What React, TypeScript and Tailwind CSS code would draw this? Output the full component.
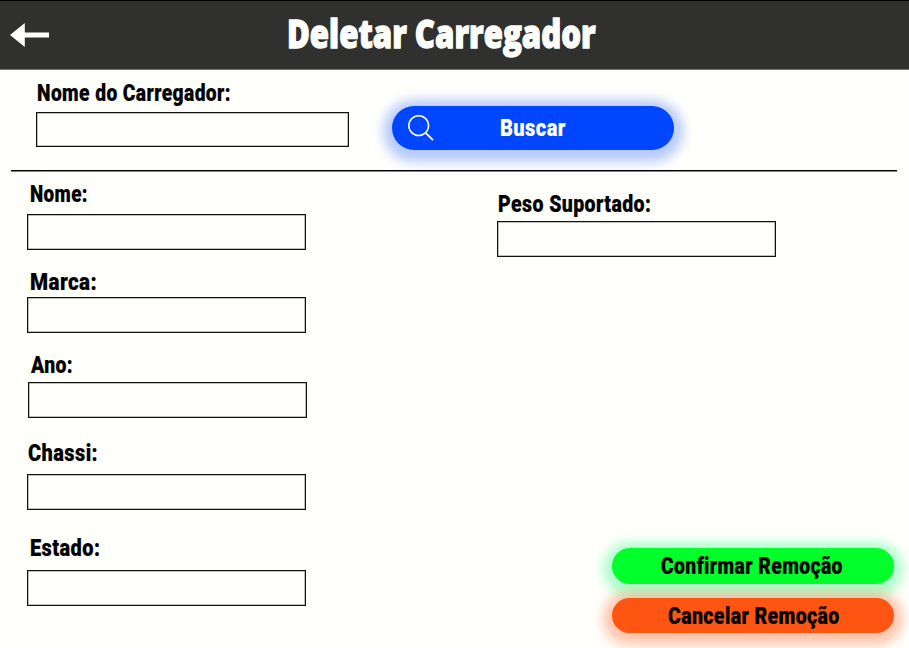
import { useLayoutEffect, useRef, useState } from "react";

/* Text condensed horizontally so that it fills the given width. */
function Condensed({ text, width, className }: { text: string; width: number; className: string }) {
  const ref = useRef<HTMLSpanElement>(null);
  const [scale, setScale] = useState(1);
  useLayoutEffect(() => {
    if (ref.current) setScale(width / ref.current.offsetWidth);
  }, [text, width]);
  return (
    <span className="block" style={{ width }}>
      <span
        ref={ref}
        className={`inline-block origin-left align-top whitespace-nowrap ${className}`}
        style={{ transform: `scaleX(${scale})` }}
      >
        {text}
      </span>
    </span>
  );
}

const labelFont = "h-5 text-[24px] leading-[20px] font-black tracking-[0.5px] [-webkit-text-stroke:0.2px_currentColor]";

function Field({
  label,
  labelWidth,
  className = "",
  labelClass,
  inputClass,
}: {
  label: string;
  labelWidth: number;
  className?: string;
  labelClass: string;
  inputClass: string;
}) {
  return (
    <label className={`block ${className}`}>
      <span className={`block h-5 ${labelClass}`}>
        <Condensed text={label} width={labelWidth} className={`${labelFont} text-black`} />
      </span>
      <input
        type="text"
        className={`block border border-[#111] bg-transparent shadow-[inset_0_0_0_0.5px_rgba(0,0,0,0.5)] outline-none ${inputClass}`}
      />
    </label>
  );
}

export default function App() {
  return (
    <div className="flex h-[648px] w-[909px] flex-col overflow-hidden bg-[#fffffc] font-[Roboto,'Liberation_Sans',sans-serif]">
      <header className="flex h-[70px] shrink-0 border-t border-b border-t-black border-b-[#777775] bg-[#30302e]">
        <button type="button" aria-label="Voltar" className="mt-[21px] ml-[10px] h-[26px] w-10">
          <svg width="40" height="26" viewBox="0 0 40 26" fill="#fffffc">
            <path d="M0 13 14.8 1v9.6H39v5H14.8V25Z" />
          </svg>
        </button>
        <h1 className="mt-[12px] ml-[237px]">
          <Condensed
            text="Deletar Carregador"
            width={309}
            className="font-['Open_Sans'] text-[38.5px] leading-[40px] font-extrabold text-[#fffffc] [-webkit-text-stroke:1.3px_currentColor]"
          />
        </h1>
      </header>

      <section className="flex h-[100px] shrink-0 pl-[36px]">
        <Field
          label="Nome do Carregador:"
          labelWidth={194}
          className="mt-[13px]"
          labelClass="pl-px"
          inputClass="mt-[9px] h-[35px] w-[313px]"
        />
        <button
          type="button"
          className="mt-[36px] ml-[43px] flex h-[44px] w-[282px] rounded-full bg-[#0046ff] shadow-[0_3px_12px_9px_rgba(0,70,255,0.29)]"
        >
          <svg className="mt-[8px] ml-[15px]" width="28" height="28" viewBox="0 0 28 28" fill="none" stroke="#fffffc" strokeWidth="1.5">
            <circle cx="11.7" cy="11.6" r="9.9" />
            <path d="m18.6 18.8 7.4 7.4" strokeWidth="1.8" />
          </svg>
          <span className="mt-[12px] ml-[65px]">
            <Condensed text="Buscar" width={66} className={`${labelFont} text-[#fffffc]`} />
          </span>
        </button>
      </section>

      <hr className="relative ml-[11px] h-[2px] w-[886px] shrink-0 border-t border-b border-t-black border-b-[#858583]" />

      <main className="flex min-h-0 flex-1">
        <div className="w-[497px] shrink-0 pl-[27px]">
          <Field label="Nome:" labelWidth={58} className="mt-[12px]" labelClass="pl-[3px]" inputClass="mt-[10px] h-[36px] w-[279px]" />
          <Field label="Marca:" labelWidth={67} className="mt-[22px]" labelClass="pl-[3px]" inputClass="mt-[5px] h-[36px] w-[279px]" />
          <Field label="Ano:" labelWidth={42} className="mt-[22px]" labelClass="pl-[4px]" inputClass="mt-[7px] ml-px h-[36px] w-[279px]" />
          <Field label="Chassi:" labelWidth={70} className="mt-[25px]" labelClass="pl-px" inputClass="mt-[11px] h-[36px] w-[279px]" />
          <Field label="Estado:" labelWidth={70} className="mt-[28px]" labelClass="pl-[3px]" inputClass="mt-[12px] h-[36px] w-[279px]" />
        </div>

        <div className="flex flex-1 flex-col">
          <Field label="Peso Suportado:" labelWidth={153} className="mt-[22px]" labelClass="pl-px" inputClass="mt-[7px] h-[36px] w-[279px]" />
          <div className="mt-auto mb-[15px] ml-[115px] flex flex-col gap-[14px]">
            <button
              type="button"
              className="flex h-[36px] w-[282px] rounded-full bg-[#00ff2b] pt-[8px] pl-[49px] shadow-[0_3px_12px_9px_rgba(0,255,100,0.33)]"
            >
              <Condensed text="Confirmar Remoção" width={182} className={`${labelFont} text-black`} />
            </button>
            <button
              type="button"
              className="flex h-[35px] w-[282px] rounded-full bg-[#ff5512] pt-[8px] pl-[56px] shadow-[0_3px_12px_9px_rgba(255,85,18,0.35)]"
            >
              <Condensed text="Cancelar Remoção" width={172} className={`${labelFont} text-black`} />
            </button>
          </div>
        </div>
      </main>
    </div>
  );
}
